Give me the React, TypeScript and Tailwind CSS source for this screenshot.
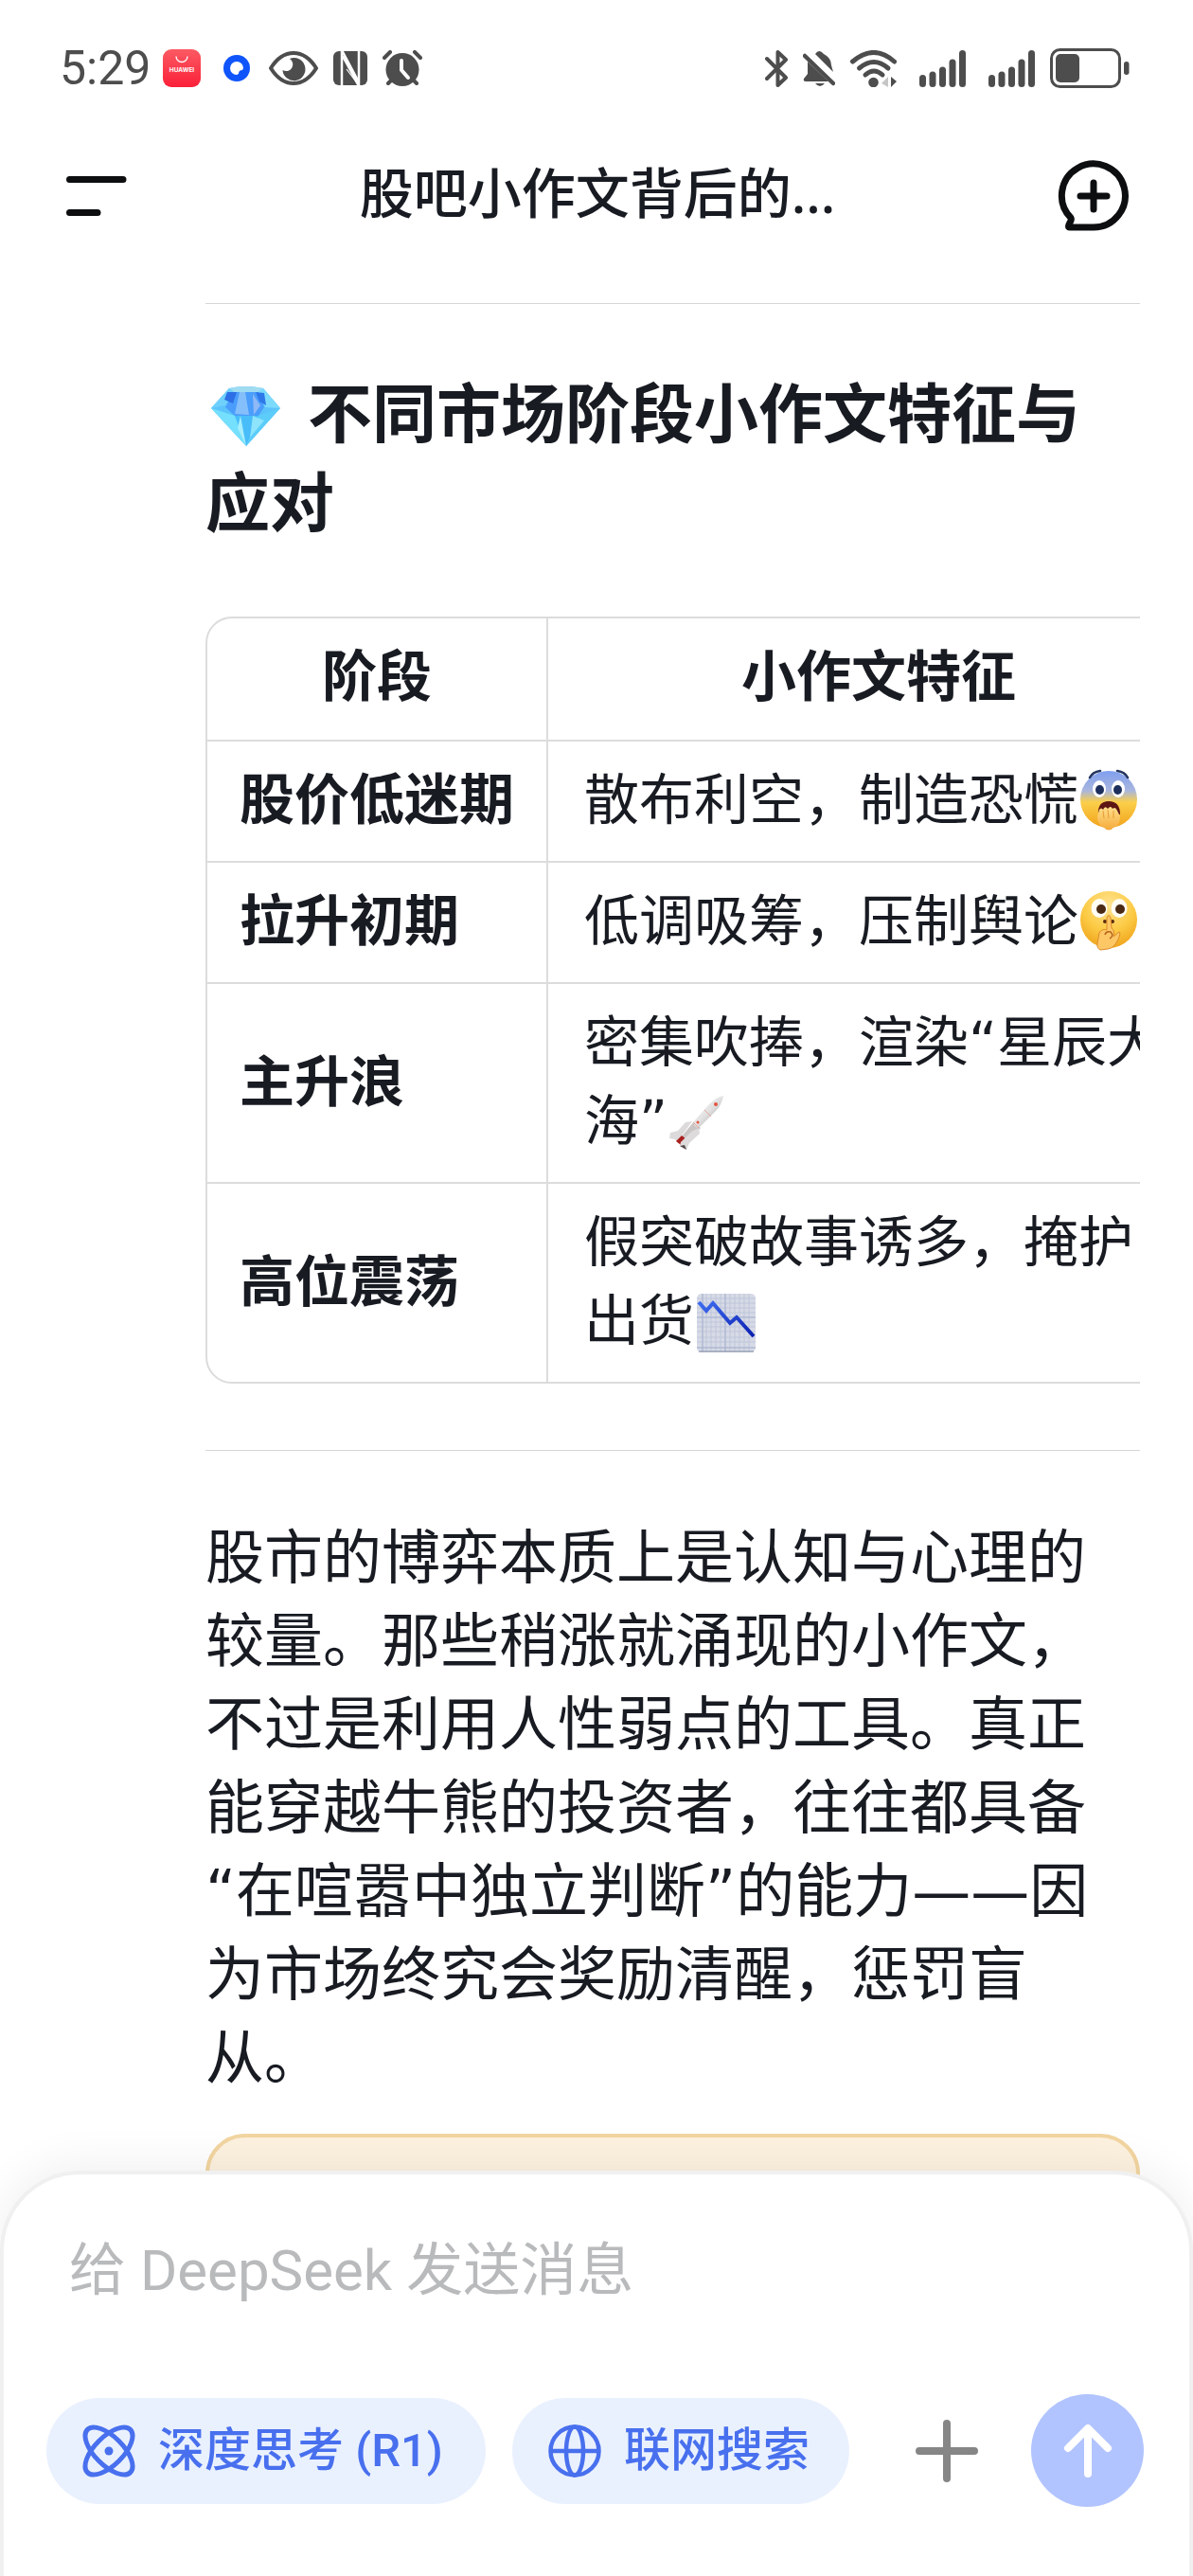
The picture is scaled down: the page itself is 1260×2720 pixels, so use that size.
import { useState } from "react"
import type { ReactNode } from "react"

function ScaredFace() {
  return (
    <svg viewBox="0 0 60 66" className="mb-2 ml-[2px] inline-block h-[66px] w-[60px] align-middle" role="img" aria-label="恐慌">
      <defs>
        <linearGradient id="scared" x1="0" y1="0" x2="0" y2="1">
          <stop offset="0" stopColor="#7f9ff0" />
          <stop offset="0.35" stopColor="#a9b6dd" />
          <stop offset="0.55" stopColor="#fbcf4a" />
          <stop offset="1" stopColor="#f2a31c" />
        </linearGradient>
        <linearGradient id="hand" x1="0" y1="0" x2="0" y2="1">
          <stop offset="0" stopColor="#ffe08c" />
          <stop offset="1" stopColor="#f5a93a" />
        </linearGradient>
      </defs>
      <circle cx="30" cy="32" r="30" fill="url(#scared)" />
      <path d="M10 9 Q13 3 21 2" fill="none" stroke="#23345f" strokeWidth="2.6" strokeLinecap="round" />
      <path d="M50 9 Q47 3 39 2" fill="none" stroke="#23345f" strokeWidth="2.6" strokeLinecap="round" />
      <ellipse cx="20" cy="21" rx="7" ry="9" fill="#fff" />
      <ellipse cx="40" cy="21" rx="7" ry="9" fill="#fff" />
      <ellipse cx="20.500" cy="22" rx="4.500" ry="5" fill="#1c2f5c" />
      <ellipse cx="39.500" cy="22" rx="4.500" ry="5" fill="#1c2f5c" />
      <path d="M19 48 Q18 34 30 34 Q42 34 42 48 Z" fill="#5d1614" />
      <path d="M18 50 L20 43 Q22 40 24 43 Q26 38 29 42 Q32 38 34 42 Q37 39 39 44 L42 50 Q42 60 36 61 Q30 68 24 61 Q18 59 18 50 Z" fill="url(#hand)" />
      <path d="M24 44 L25 52 M29 43 L30 52 M35 44 L35 52" stroke="#e79a35" strokeWidth="1" fill="none" />
    </svg>
  )
}

function ShushFace() {
  return (
    <svg viewBox="0 0 60 64" className="mb-2 ml-[2px] inline-block h-[64px] w-[60px] align-middle" role="img" aria-label="安静">
      <defs>
        <radialGradient id="shush" cx="0.5" cy="0.25" r="0.8">
          <stop offset="0" stopColor="#ffe391" />
          <stop offset="0.55" stopColor="#fccb45" />
          <stop offset="1" stopColor="#ee9f17" />
        </radialGradient>
      </defs>
      <circle cx="30" cy="30" r="30" fill="url(#shush)" />
      <ellipse cx="20" cy="18" rx="8.500" ry="10" fill="#fffdf4" />
      <ellipse cx="41" cy="18" rx="8.500" ry="10" fill="#fffdf4" />
      <circle cx="22" cy="19" r="5" fill="#4a2a14" />
      <circle cx="42" cy="19" r="5" fill="#4a2a14" />
      <circle cx="26" cy="32" r="2" fill="#5a2c10" />
      <circle cx="34" cy="32" r="2" fill="#5a2c10" />
      <path d="M28 41 L28 28 Q30 23 32 28 L33 39 Q37 42 35 48 L41 43 Q43 44 40 51 Q36 60 29 61 L21 62 Q17 60 18 55 L20 44 Q23 39 28 41 Z" fill="#fdc766" stroke="#dd8b26" strokeWidth="1" />
      <path d="M26 46 Q27 42 32 43 Q36 47 31 50" fill="none" stroke="#b8651b" strokeWidth="1.500" />
    </svg>
  )
}

function Rocket() {
  return (
    <svg viewBox="0 0 58 58" className="mb-1 ml-[2px] inline-block h-[58px] w-[58px] align-middle" role="img" aria-label="火箭">
      <defs>
        <linearGradient id="hull" x1="0" y1="0" x2="1" y2="1">
          <stop offset="0" stopColor="#f6f6f6" />
          <stop offset="0.5" stopColor="#e3e2e2" />
          <stop offset="1" stopColor="#8f8c8c" />
        </linearGradient>
      </defs>
      <path d="M24 27 L17 28 L9 37 L1 39 L0 45 L6 46 L8 49 Z" fill="#dcdada" />
      <path d="M8 49 L26 27 L33 34 L15 52 Z" fill="#c9c5c4" />
      <path d="M7 48 L13 42 L18 46 L12 52 Z" fill="#a8201d" />
      <path d="M57 0 Q55 10 49 16 L31 34 Q27 34 25 28 L42 9 Q49 2 57 0 Z" fill="url(#hull)" />
      <path d="M31 34 L32 40 L21 50 L18 57 L11 53 L12 49 L23 38 Z" fill="#dddbdb" />
      <path d="M11 53 L18 57 L16 52 Z" fill="#55494a" />
      <path d="M37 15 L44 22 M25 28 L31 34" stroke="#e3a59c" strokeWidth="1" />
      <circle cx="49" cy="9" r="2" fill="#e2553f" />
      <circle cx="30" cy="28" r="1.500" fill="#e2553f" />
    </svg>
  )
}

function FallingChart() {
  return (
    <svg viewBox="0 0 62 62" className="mb-1 ml-[3px] inline-block h-[62px] w-[62px] align-middle" role="img" aria-label="下跌">
      <defs>
        <linearGradient id="fall" x1="0" y1="0" x2="1" y2="1">
          <stop offset="0" stopColor="#3f6df0" />
          <stop offset="1" stopColor="#0a1fb0" />
        </linearGradient>
      </defs>
      <rect width="62" height="62" rx="5" fill="#d6dae6" />
      <path
        d="M6 0V62M10 0V62M15 0V62M20 0V62M25 0V62M30 0V62M35 0V62M40 0V62M45 0V62M50 0V62M55 0V62M0 5H62M0 10H62M0 15H62M0 20H62M0 25H62M0 30H62M0 35H62M0 40H62M0 46H62M0 51H62M0 57H62"
        stroke="#bfc6da"
        strokeWidth="1"
      />
      <path d="M6 0V62M0 25H62M0 57H62M30 0V62" stroke="#a9b3d0" strokeWidth="1" />
      <path d="M2 9 L10 18 L17 10 L35 31 L42 25 L60 45" fill="none" stroke="url(#fall)" strokeWidth="4" />
      <path d="M2 61 H60" stroke="#9da5b8" strokeWidth="1.500" />
    </svg>
  )
}

function Diamond() {
  return (
    <svg viewBox="0 0 73 63" className="mr-[29px] mb-2 ml-[6px] inline-block h-[63px] w-[73px] align-middle" role="img" aria-label="钻石">
      <path d="M19 2 Q36 -2 55 2 L73 23 L37 63 L0 23 Z" fill="#5cc3fb" />
      <path d="M19 2 Q36 -2 55 2 L50 6 H24 Z" fill="#9fdcf2" />
      <path d="M24 6 H50 L56 22 L50 31 H25 L15 22 Z" fill="#4a9dfb" />
      <path d="M19 2 L24 6 L15 20 L0 23 Z" fill="#6fd0fb" />
      <path d="M55 2 L50 6 L57 22 L73 23 Z" fill="#7cdafc" />
      <path d="M17 6 L27 6 L23 18 L14 14 Z" fill="#2c6fe6" />
      <path d="M47 6 L56 7 L58 20 L51 16 Z" fill="#2f78ea" />
      <path d="M30 6 L36 6 L40 30 L25 29 Z" fill="#84bffb" />
      <path d="M44 8 L52 20 L45 30 Z" fill="#8fb9f7" />
      <path d="M0 23 L25 31 L37 63 Z" fill="#74e0fd" />
      <path d="M25 31 H50 L37 63 Z" fill="#48bdf9" />
      <path d="M73 23 L50 31 L37 63 Z" fill="#5ccdf9" />
      <path d="M31 31 L37 63 L28 44 Z" fill="#a7eefd" />
      <path d="M44 31 L56 36 L41 54 Z" fill="#8de4fb" />
    </svg>
  )
}

function SignalBars() {
  return (
    <svg viewBox="0 0 49 39" className="h-[39px] w-[49px]" fill="#4d4d4d">
      <rect x="0" y="26" width="7" height="13" rx="3.500" />
      <rect x="10.500" y="22.500" width="7" height="16.500" rx="3.500" />
      <rect x="21" y="17.500" width="7" height="21.500" rx="3.500" />
      <rect x="31.500" y="9.500" width="7" height="29.500" rx="3.500" />
      <rect x="42" y="0" width="7" height="39" rx="3.500" />
    </svg>
  )
}

function StatusBar() {
  return (
    <div className="flex h-36 shrink-0 items-center justify-between pr-[67px] pl-[63px] text-[#4d4d4d]">
      <div className="flex items-center">
        <span className="w-[109px] font-[Roboto,sans-serif] text-[50px] leading-none">5:29</span>
        <svg viewBox="0 0 40 40" className="h-10 w-10">
          <defs>
            <linearGradient id="store" x1="0" y1="0" x2="0" y2="1">
              <stop offset="0" stopColor="#fb5a63" />
              <stop offset="1" stopColor="#fb2039" />
            </linearGradient>
          </defs>
          <rect width="40" height="40" rx="9" fill="url(#store)" />
          <path d="M14 7.500 A6 6 0 0 0 26 7.500" fill="none" stroke="#fff" strokeWidth="1.300" />
          <text x="20" y="24" textAnchor="middle" fontSize="6.500" fontWeight="700" fill="#fff" fontFamily="Inter, sans-serif">
            HUAWEI
          </text>
        </svg>
        <svg viewBox="0 0 28 28" className="ml-6 h-7 w-7">
          <circle cx="14" cy="14" r="14" fill="#0f55fb" />
          <path d="M14 7 A7 7 0 0 1 21 14 L20 16 Q16 16 16 20 L14 21 A7 7 0 0 1 14 7 Z" fill="#fff" />
        </svg>
        <svg viewBox="0 0 52 36" className="ml-5 h-9 w-[52px]">
          <path d="M2 18 Q12 2 26 2 Q40 2 50 18 Q40 34 26 34 Q12 34 2 18 Z" fill="none" stroke="#4d4d4d" strokeWidth="4" strokeLinejoin="round" />
          <path d="M22 8 A12 12 0 1 1 14.500 20 A7 7 0 0 0 22 8 Z" fill="#4d4d4d" />
        </svg>
        <svg viewBox="0 0 36 38" className="ml-4 h-[38px] w-9">
          <rect y="1" width="36" height="36" rx="6" fill="#4d4d4d" />
          <path d="M9 38 V0 L26 32" fill="none" stroke="#fff" strokeWidth="2.500" />
          <path d="M27 0 V38 L10 6" fill="none" stroke="#fff" strokeWidth="2.500" />
          <path d="M10 8 L27 34 M14 20 L26 36" fill="none" stroke="#fff" strokeWidth="1.200" />
        </svg>
        <svg viewBox="0 0 42 38" className="ml-4 h-[38px] w-[42px]">
          <circle cx="21" cy="20.500" r="17.500" fill="#4d4d4d" />
          <path d="M2 8 L8 2 M40 8 L34 2 M6 35 L10 31 M36 35 L32 31" stroke="#4d4d4d" strokeWidth="4" strokeLinecap="round" />
          <path d="M20 11 V21 L27 29" fill="none" stroke="#fff" strokeWidth="4" strokeLinecap="round" strokeLinejoin="round" />
        </svg>
      </div>
      <div className="flex items-center">
        <svg viewBox="0 0 24 39" className="h-[39px] w-6" fill="none" stroke="#4d4d4d" strokeWidth="4" strokeLinecap="round" strokeLinejoin="round">
          <path d="M2 9 L22 29 L13.500 37 V2 L22 10 L2 30" />
        </svg>
        <svg viewBox="0 0 34 39" className="ml-4 h-[39px] w-[34px]">
          <path d="M5 12 L5 25 L1 30 Q0 33 3 33 H27 Z" fill="#4d4d4d" />
          <path d="M13 4 Q17 -2 22 4 Q30 8 30 16 L32 23 Z" fill="#4d4d4d" />
          <path d="M13 35 H23 Q18 41 13 35 Z" fill="#4d4d4d" />
          <path d="M2 6 L32 35" stroke="#4d4d4d" strokeWidth="4.500" strokeLinecap="round" />
        </svg>
        <svg viewBox="0 0 49 39" className="ml-4 h-[39px] w-[49px]">
          <path d="M2.500 12 Q25 -7 46.500 12" fill="none" stroke="#4d4d4d" strokeWidth="5" strokeLinecap="round" />
          <path d="M9.500 19 Q25 6 40 19" fill="none" stroke="#4d4d4d" strokeWidth="5" strokeLinecap="round" />
          <path d="M16 26 Q25 18 34 26" fill="none" stroke="#4d4d4d" strokeWidth="5" strokeLinecap="round" />
          <circle cx="24.500" cy="34" r="5.300" fill="#4d4d4d" />
          <path d="M33 35 L40 28 V39 Z" fill="#c6c6c6" />
          <path d="M43 28 L49 33 L43 39 Z" fill="#4d4d4d" />
        </svg>
        <div className="ml-6 flex gap-6">
          <SignalBars />
          <SignalBars />
        </div>
        <svg viewBox="0 0 84 42" className="ml-4 h-[42px] w-[84px]">
          <rect x="1.500" y="1.500" width="72" height="39" rx="9" fill="none" stroke="#4d4d4d" strokeWidth="3" />
          <rect x="6" y="6" width="25" height="30" rx="5" fill="#4d4d4d" />
          <rect x="78" y="14" width="5.500" height="14" rx="2.700" fill="#4d4d4d" />
        </svg>
      </div>
    </div>
  )
}

function Header() {
  return (
    <header className="flex h-[126px] shrink-0 items-center justify-between pr-[67px] pl-[69px]">
      <button type="button" aria-label="菜单" className="w-[76px]">
        <svg viewBox="0 0 76 42" className="h-[42px] w-[76px]" stroke="#0d0e10" strokeWidth="7" strokeLinecap="round">
          <path d="M4.500 3.500 H61 M4.500 38.500 H34" />
        </svg>
      </button>
      <h1 className="pb-2 text-[57px] leading-[64px] font-medium">股吧小作文背后的...</h1>
      <button type="button" aria-label="新对话">
        <svg viewBox="0 0 76 76" className="h-[76px] w-[76px]" fill="none" stroke="#0d0e10" strokeWidth="7" strokeLinecap="round" strokeLinejoin="round">
          <path d="M38 71 A33.500 33.500 0 1 0 14 61 Q15 63 13 66 Q10 71 13 71 Z" />
          <path d="M38 24 V52 M24 38 H52" />
        </svg>
      </button>
    </header>
  )
}

const rows: { stage: string; feature: ReactNode }[] = [
  { stage: "股价低迷期", feature: <>散布利空，制造恐慌<ScaredFace /></> },
  { stage: "拉升初期", feature: <>低调吸筹，压制舆论<ShushFace /></> },
  { stage: "主升浪", feature: <>密集吹捧，渲染“星辰大海”<Rocket /></> },
  { stage: "高位震荡", feature: <>假突破故事诱多，掩护出货<FallingChart /></> },
]

function StageTable() {
  return (
    <div className="mt-[74px] overflow-x-auto [scrollbar-width:none]">
      <table className="w-max border-separate border-spacing-0 rounded-[28px] border-2 border-[#dcdcdc] font-['DejaVu_Sans','Noto_Sans_CJK_SC',sans-serif] text-[58px] leading-[83px]">
        <thead>
          <tr>
            <th className="border-r-2 border-b-2 border-[#dcdcdc] px-[34px] pt-[21px] pb-6 font-bold">阶段</th>
            <th className="w-[698px] border-b-2 border-[#dcdcdc] px-[34px] pt-[21px] pb-6 font-bold">小作文特征</th>
          </tr>
        </thead>
        <tbody>
          {rows.map((row, i) => {
            const line = i < rows.length - 1 ? "border-b-2" : ""
            return (
              <tr key={row.stage}>
                <th scope="row" className={`${line} border-r-2 border-[#dcdcdc] px-[34px] pt-[21px] pb-[22px] text-left font-bold whitespace-nowrap`}>
                  {row.stage}
                </th>
                <td className={`${line} w-[698px] max-w-[698px] border-[#dcdcdc] pt-[21px] pr-[34px] pb-[22px] pl-[38px]`}>{row.feature}</td>
              </tr>
            )
          })}
        </tbody>
      </table>
    </div>
  )
}

function Composer() {
  const [message, setMessage] = useState("")

  return (
    <form
      onSubmit={(e) => e.preventDefault()}
      className="relative -mt-28 shrink-0 rounded-t-[84px] border-4 border-b-0 border-[#f0f0f0] bg-white pt-[60px] pr-12 pb-[73px] pl-[45px] shadow-[0_-8px_48px_rgba(0,0,0,0.06)]"
    >
      <input
        type="text"
        aria-label="消息"
        value={message}
        onChange={(e) => setMessage(e.target.value)}
        placeholder="给 DeepSeek 发送消息"
        className="block h-[84px] w-full px-6 font-[Roboto,'Noto_Sans_CJK_SC',sans-serif] text-[60px] leading-[84px] outline-none placeholder:text-[#b8babc]"
      />
      <div className="mt-[88px] flex items-center justify-between font-[Roboto,'Noto_Sans_CJK_SC',sans-serif] text-[49px] leading-[56px] font-medium text-[#4870ee]">
        <div className="flex gap-7">
          <button type="button" className="flex h-28 items-center rounded-full bg-[#eaf1fe] pr-[45px] pl-[38px]">
            <svg viewBox="0 0 56 56" className="mr-6 h-14 w-14" fill="none" stroke="#4870ee" strokeWidth="5">
              <ellipse cx="28" cy="28" rx="32" ry="15" transform="rotate(45 28 28)" />
              <ellipse cx="28" cy="28" rx="32" ry="15" transform="rotate(-45 28 28)" />
              <circle cx="28" cy="28" r="4.500" fill="#4870ee" stroke="none" />
            </svg>
            深度思考 (R1)
          </button>
          <button type="button" className="flex h-28 items-center rounded-full bg-[#eaf1fe] pr-[42px] pl-[38px]">
            <svg viewBox="0 0 56 56" className="mr-6 h-14 w-14" fill="none" stroke="#4870ee" strokeWidth="4.500">
              <circle cx="28" cy="28" r="25.500" />
              <ellipse cx="28" cy="28" rx="9" ry="25.500" />
              <path d="M2 28 H54" />
            </svg>
            联网搜索
          </button>
        </div>
        <div className="flex items-center gap-14">
          <button type="button" aria-label="添加附件">
            <svg viewBox="0 0 66 66" className="h-[66px] w-[66px]" stroke="#868686" strokeWidth="8" strokeLinecap="round">
              <path d="M33 4 V62 M4 33 H62" />
            </svg>
          </button>
          <button type="submit" aria-label="发送" className="flex h-[119px] w-[119px] items-center justify-center rounded-full bg-[#b1c4ff]">
            <svg viewBox="0 0 52 56" className="h-14 w-[52px]" fill="none" stroke="#fff" strokeWidth="8" strokeLinecap="round" strokeLinejoin="round">
              <path d="M26 52 V5 M5 25 L26 4 L47 25" />
            </svg>
          </button>
        </div>
      </div>
    </form>
  )
}

export default function App() {
  return (
    <div lang="zh-CN" className="flex h-screen flex-col overflow-hidden bg-white font-['Noto_Sans','Noto_Sans_CJK_SC',sans-serif] text-[#181b22]">
      <StatusBar />
      <Header />
      <main className="min-h-0 flex-1 overflow-hidden pt-[50px] pr-14 pl-[217px]">
        <hr className="border-[#d6d6d6]" />
        <h2 className="mt-[68px] text-[68px] leading-[94px] font-bold">
          <Diamond />
          不同市场阶段小作文特征与应对
        </h2>
        <StageTable />
        <hr className="mt-[70px] border-[#d6d6d6]" />
        <p className="mt-[70px] pr-10 font-['DejaVu_Sans','Noto_Sans_CJK_SC',sans-serif] text-[62px] leading-[88px]">
          股市的博弈本质上是认知与心理的较量。那些稍涨就涌现的小作文，不过是利用人性弱点的工具。真正能穿越牛熊的投资者，往往都具备“在喧嚣中独立判断”的能力——因为市场终究会奖励清醒，惩罚盲从。
        </p>
        <div className="mt-[35px] h-52 rounded-[42px] border-4 border-[#f2d5a0] bg-[#fdf1df]" />
      </main>
      <Composer />
    </div>
  )
}
